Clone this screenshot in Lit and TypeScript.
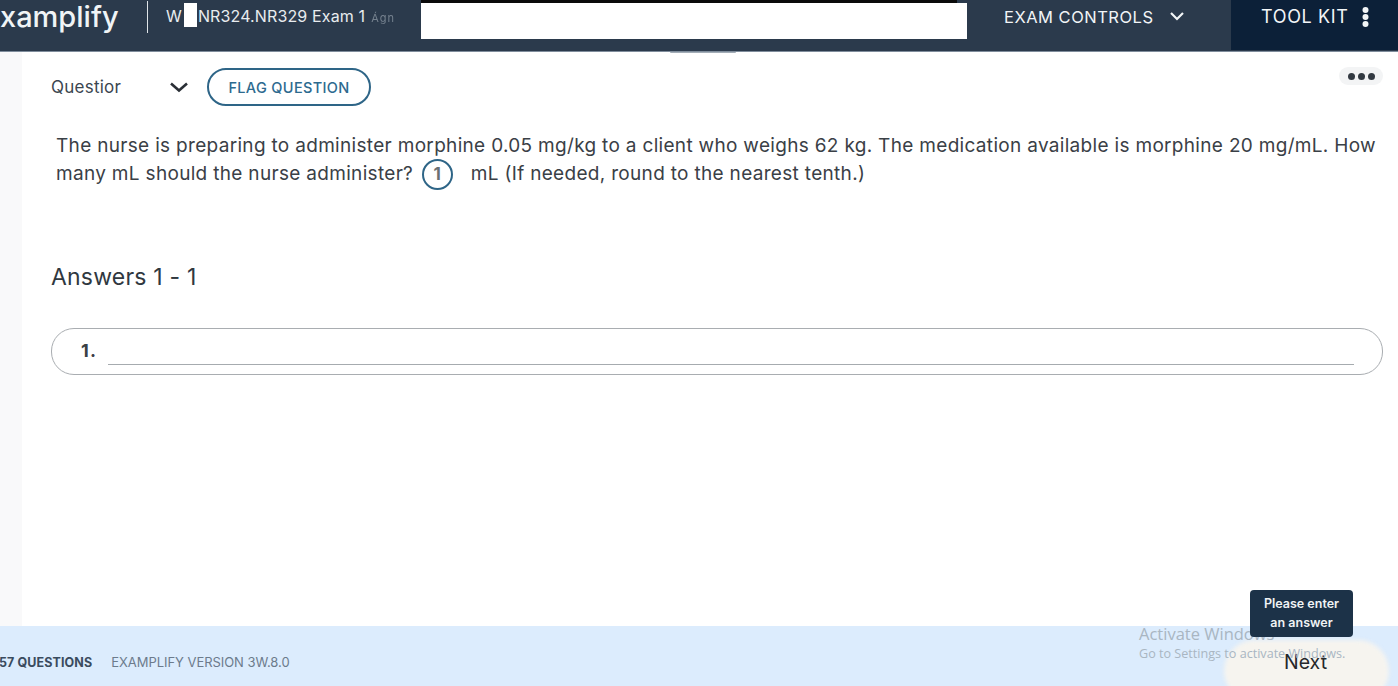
import { LitElement, css, html } from 'lit';
import { customElement } from 'lit/decorators.js';

@customElement('app-root')
export class AppRoot extends LitElement {
  static styles = css`
    :host {
      display: block;
      width: 1398px;
      height: 686px;
      overflow: hidden;
      position: relative;
      background: #fff;
      font-family: Inter, 'Liberation Sans', sans-serif;
    }

    * {
      box-sizing: border-box;
    }

    .page {
      display: flex;
      flex-direction: column;
      height: 686px;
    }

    /* top bar */
    .header {
      display: flex;
      align-items: stretch;
      flex: 0 0 52px;
      background: #2b3a4c;
      border-bottom: 1px solid #7f8d9c;
      color: #f2f5f7;
    }

    .logo {
      flex: 0 0 147px;
      font-size: 29px;
      line-height: 33px;
      font-weight: 500;
      letter-spacing: 0;
      color: #f0f4f6;
    }

    .logo-rule {
      flex: 0 0 1px;
      height: 32px;
      margin-top: 1px;
      background: #dfe4e8;
    }

    .exam-title {
      flex: 0 0 856px;
      padding: 6px 0 0 18px;
      font-size: 16px;
      line-height: 20px;
      letter-spacing: 0.13px;
      white-space: nowrap;
      color: #e8ecef;
    }

    .hidden-gap {
      display: inline-block;
      width: 16px;
    }

    .controls {
      display: flex;
      align-items: flex-start;
      gap: 16px;
      flex: 0 0 227px;
      padding: 7px 0 0 0;
      font-size: 16.5px;
      line-height: 20px;
      letter-spacing: 0.5px;
      white-space: nowrap;
    }

    .controls svg {
      margin-top: 5px;
    }

    .toolkit {
      display: flex;
      align-items: flex-start;
      gap: 13px;
      flex: 1;
      margin-bottom: 1px;
      padding: 6px 0 0 30px;
      background: #0c2038;
      font-size: 18px;
      line-height: 21px;
      letter-spacing: 0.65px;
      white-space: nowrap;
    }

    .toolkit svg {
      margin-top: 1px;
    }

    /* redacted patches */
    .patch {
      position: absolute;
      background: #fff;
    }

    .patch-letter {
      left: 184px;
      top: 3px;
      width: 13px;
      height: 24px;
    }

    .patch-title {
      left: 421px;
      top: 3px;
      width: 546px;
      height: 36px;
    }

    .patch-top {
      position: absolute;
      left: 421px;
      top: 0;
      width: 536px;
      height: 3px;
      background: #0a0a0a;
    }

    .blur-mark {
      display: inline-block;
      margin-left: 6px;
      font-size: 11px;
      letter-spacing: 1px;
      color: #75818e;
      filter: blur(0.6px);
    }

    .header-notch {
      position: absolute;
      left: 670px;
      top: 52px;
      width: 66px;
      height: 1px;
      border-radius: 0 0 33px 33px;
      background: #a3adb7;
    }

    /* body */
    .body {
      display: flex;
      flex: 1;
      min-height: 0;
    }

    .gutter {
      flex: 0 0 22px;
      background: #f9f9fa;
    }

    .content {
      flex: 1;
      padding: 16px 15px 0 29px;
      min-width: 0;
    }

    .question-bar {
      display: flex;
      align-items: center;
      height: 38px;
    }

    .question-label {
      width: 119px;
      font-size: 17px;
      letter-spacing: 0.25px;
      color: #3b4650;
    }

    .flag {
      display: flex;
      align-items: center;
      justify-content: center;
      width: 164px;
      height: 38px;
      margin-left: 19px;
      border: 2px solid #2e6587;
      border-radius: 19px;
      font-size: 14.5px;
      font-weight: 500;
      letter-spacing: 0.35px;
      color: #2d6a8f;
    }

    .more {
      display: flex;
      align-items: center;
      justify-content: center;
      gap: 3px;
      width: 44px;
      height: 18px;
      margin: -39px 0 0 auto;
      border-radius: 9px;
      background: #f3f4f5;
    }

    .more i {
      width: 7px;
      height: 7px;
      border-radius: 50%;
      background: #333a42;
    }

    .stem {
      width: 1330px;
      margin: 47px 0 0 5px;
      font-size: 19px;
      line-height: 28px;
      letter-spacing: 0.315px;
      color: #3a4046;
    }

    .blank {
      display: inline-flex;
      align-items: center;
      justify-content: center;
      width: 31px;
      height: 31px;
      margin: -5px 18px -5px 3px;
      border: 2px solid #2e6587;
      border-radius: 50%;
      vertical-align: 0;
      font-size: 17px;
      font-weight: 700;
      color: #6b6f72;
    }

    h2 {
      margin: 74px 0 0;
      font-size: 23px;
      line-height: 30px;
      font-weight: 400;
      letter-spacing: 0.2px;
      color: #30383f;
    }

    .answer {
      display: flex;
      align-items: flex-end;
      height: 47px;
      margin-top: 36px;
      padding: 0 28px 9px 29px;
      border: 1px solid #a9adb1;
      border-radius: 23px;
    }

    .answer-num {
      width: 27px;
      padding-bottom: 2px;
      font-size: 18px;
      line-height: 24px;
      font-weight: 700;
      letter-spacing: 1.2px;
      color: #3b4045;
    }

    .answer-line {
      flex: 1;
      height: 1px;
      background: #a6abaf;
    }

    /* footer */
    .footer {
      display: flex;
      align-items: center;
      flex: 0 0 60px;
      padding-top: 12px;
      background: #dcecfd;
      font-size: 12.5px;
      white-space: nowrap;
    }

    .count {
      margin-left: -1px;
      font-weight: 700;
      letter-spacing: 0.1px;
      color: #3a4b5e;
    }

    .version {
      margin-left: 19px;
      font-size: 13px;
      letter-spacing: -0.05px;
      color: #6c7b8c;
    }

    /* things lying over the footer */
    .next-blob {
      position: absolute;
      left: 1224px;
      top: 640px;
      width: 165px;
      height: 62px;
      border-radius: 31px;
      background: #f6f4ef;
      filter: blur(2px);
    }

    .next {
      position: absolute;
      left: 1284px;
      top: 651px;
      font-size: 19.5px;
      line-height: 23px;
      color: #26282b;
    }

    .activate {
      position: absolute;
      left: 1139px;
      top: 623px;
      font-family: 'Open Sans', sans-serif;
      color: #a9b6c2;
      white-space: nowrap;
    }

    .activate b {
      display: block;
      font-size: 16.5px;
      line-height: 22px;
      font-weight: 400;
    }

    .activate span {
      display: block;
      font-size: 12.6px;
      line-height: 17px;
    }

    .tip {
      position: absolute;
      left: 1250px;
      top: 590px;
      width: 103px;
      height: 47px;
      padding-top: 4px;
      border-radius: 4px;
      background: #1c3248;
      color: #f0f3f5;
      font-size: 12.5px;
      line-height: 19px;
      font-weight: 600;
      text-align: center;
    }
  `;

  render() {
    return html`
      <div class="page">
        <header class="header">
          <div class="logo">xamplify</div>
          <div class="logo-rule"></div>
          <div class="exam-title">
            W<span class="hidden-gap"></span>NR324.NR329 Exam 1<span class="blur-mark">Ágn</span>
          </div>
          <div class="controls">
            EXAM CONTROLS
            <svg width="14" height="9" viewBox="0 0 14 9" fill="none" stroke="#f2f5f7" stroke-width="2.2">
              <path d="M1 1l6 6 6-6" />
            </svg>
          </div>
          <div class="toolkit">
            TOOL KIT
            <svg width="7" height="20" viewBox="0 0 7 20" fill="#f2f5f7">
              <circle cx="3.5" cy="3" r="3" />
              <circle cx="3.5" cy="10" r="3" />
              <circle cx="3.5" cy="17" r="3" />
            </svg>
          </div>
        </header>

        <div class="body">
          <div class="gutter"></div>
          <main class="content">
            <div class="question-bar">
              <span class="question-label">Questior</span>
              <svg width="18" height="11" viewBox="0 0 18 11" fill="none" stroke="#2a2f36" stroke-width="2.6">
                <path d="M1 1.5l8 7 8-7" />
              </svg>
              <div class="flag">FLAG QUESTION</div>
            </div>
            <div class="more"><i></i><i></i><i></i></div>
            <p class="stem">
              The nurse is preparing to administer morphine 0.05 mg/kg to a client who weighs 62 kg. The
              medication available is morphine 20 mg/mL. How many mL should the nurse administer?
              <span class="blank">1</span>mL (If needed, round to the nearest tenth.)
            </p>
            <h2>Answers 1 - 1</h2>
            <div class="answer">
              <span class="answer-num">1.</span>
              <span class="answer-line"></span>
            </div>
          </main>
        </div>

        <footer class="footer">
          <span class="count">57 QUESTIONS</span>
          <span class="version">EXAMPLIFY VERSION 3W.8.0</span>
        </footer>
      </div>

      <div class="header-notch"></div>
      <div class="patch patch-letter"></div>
      <div class="patch-top"></div>
      <div class="patch patch-title"></div>
      <div class="next-blob"></div>
      <div class="next">Next</div>
      <div class="activate"><b>Activate Windows</b><span>Go to Settings to activate Windows.</span></div>
      <div class="tip">Please enter<br />an answer</div>
    `;
  }
}
